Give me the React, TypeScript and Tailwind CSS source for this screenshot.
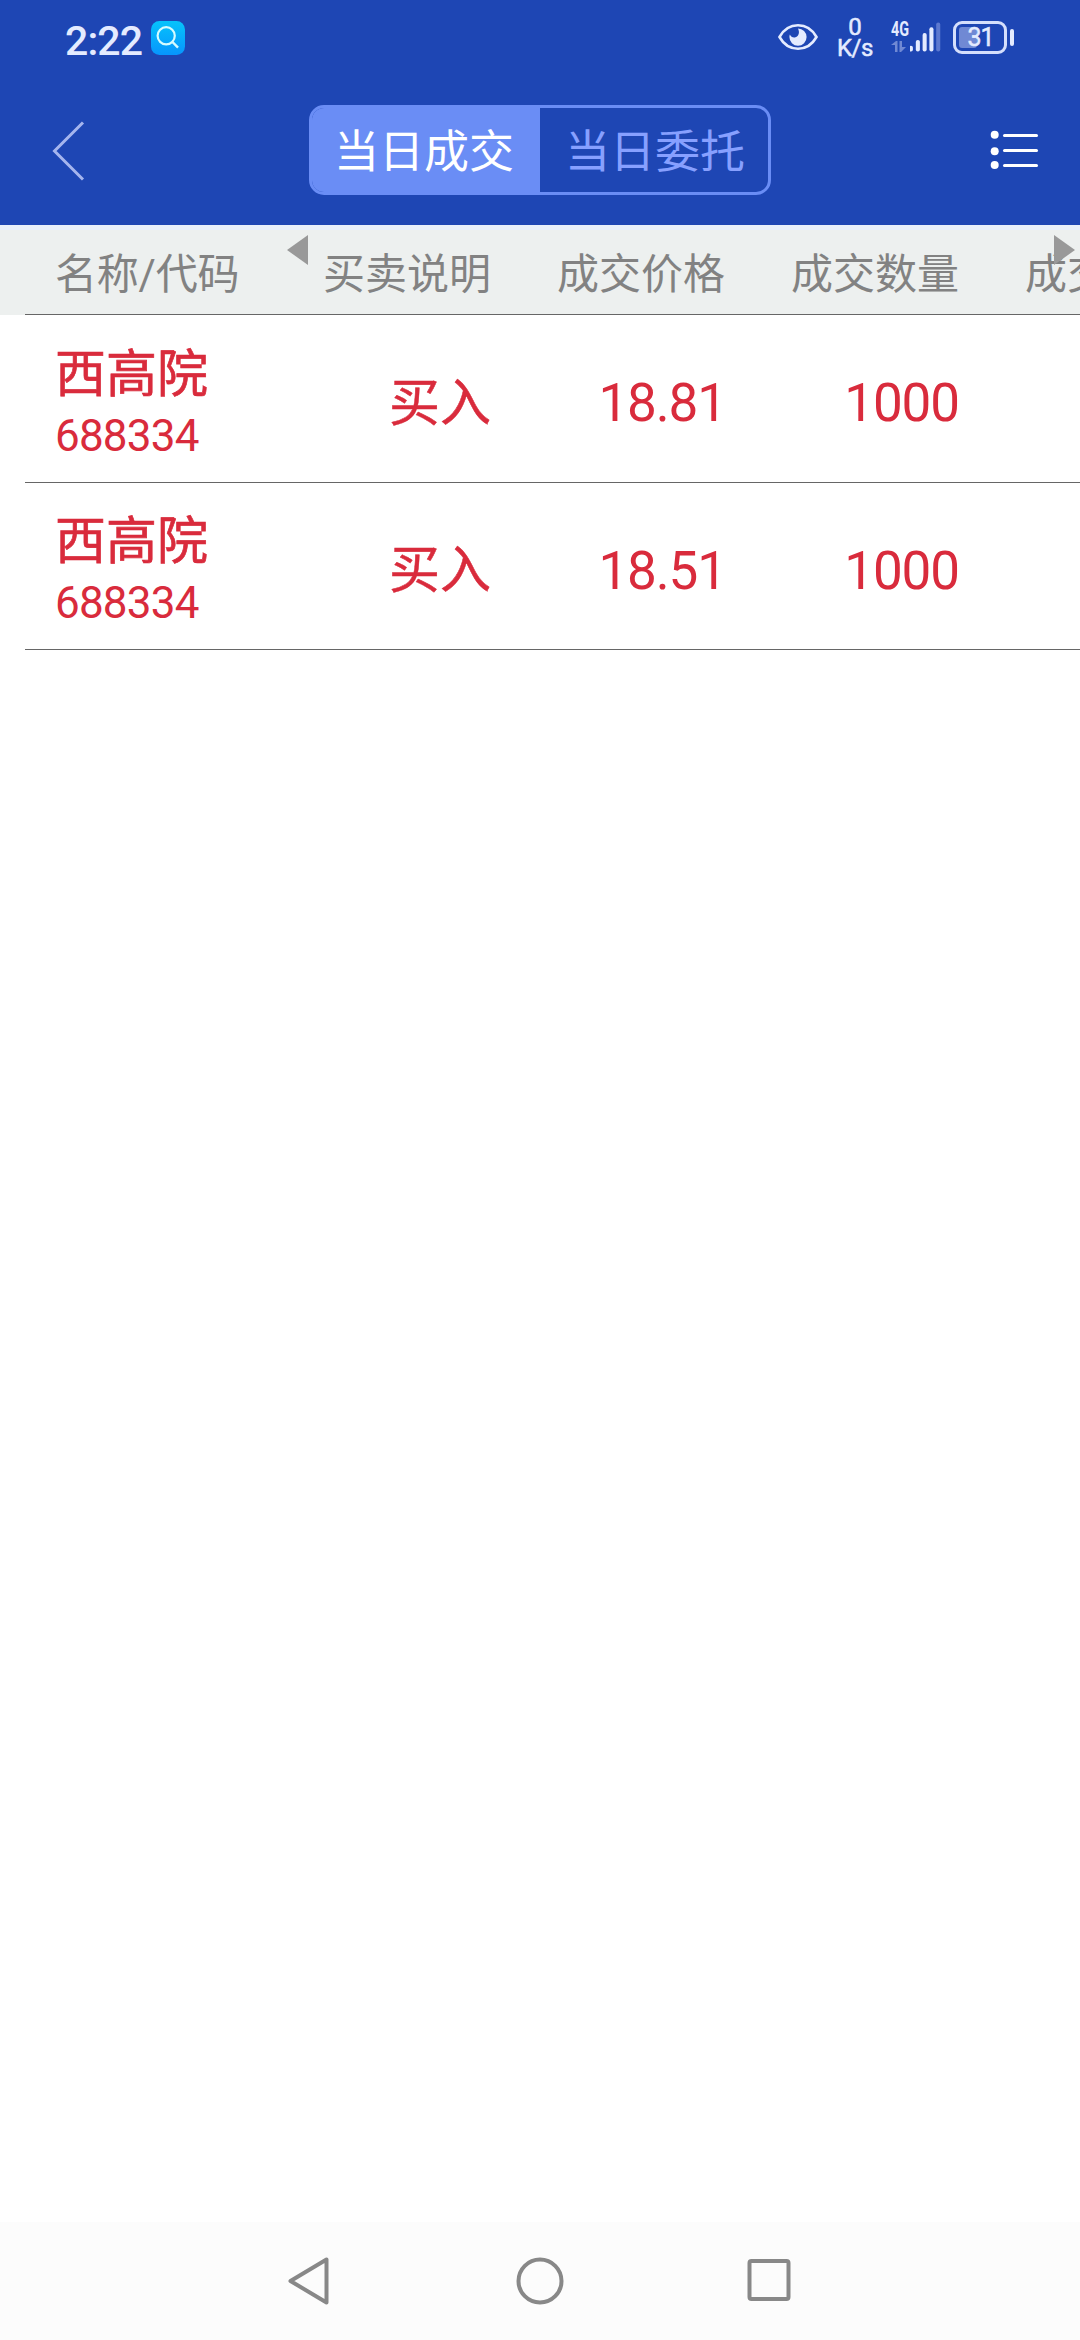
const columns = ["买卖说明", "成交价格", "成交数量"];

const trades = [
  { name: "西高院", code: "688334", side: "买入", price: "18.81", amount: "1000" },
  { name: "西高院", code: "688334", side: "买入", price: "18.51", amount: "1000" },
];

function StatusBar() {
  return (
    <div className="flex h-[75px] items-start text-[#e4ebff]">
      <div className="ml-[65px] mt-[17px] w-[86px] text-[41px] leading-[48px] font-medium tracking-[-0.9px]">2:22</div>
      <svg className="mt-[21px]" width="34" height="34" viewBox="0 0 34 34" fill="none">
        <defs>
          <linearGradient id="search" x1="0" y1="0" x2="0" y2="1">
            <stop offset="0" stopColor="#06c3fb" />
            <stop offset="1" stopColor="#0795fd" />
          </linearGradient>
        </defs>
        <rect width="34" height="34" rx="8.5" fill="url(#search)" />
        <circle cx="15.2" cy="14.8" r="8.6" stroke="#d6fbff" strokeWidth="2.2" />
        <path d="M21.5 21 27 26.6" stroke="#d6fbff" strokeWidth="2.4" />
      </svg>
      <svg className="ml-[593px] mt-[23px]" width="40" height="28" viewBox="0 0 40 28" fill="none">
        <path d="M1.5 14C6 6 12.5 2.3 20 2.3S34 6 38.500 14C34 22 27.500 25.700 20 25.700S6 22 1.500 14Z" stroke="#e4ebff" strokeWidth="2.6" />
        <path d="M20 5.500a8.600 8.600 0 1 1-8.600 8.600c0-1 .1-1.800.5-2.600 1 2.300 3.300 3.500 5.600 2.700 3.400-1.200 4.400-4.800 2.500-8.700Z" fill="#e4ebff" />
      </svg>
      <div className="ml-[18px] mt-[17px] w-[38px] text-center text-[24px] leading-[21px]">
        <div className="[-webkit-text-stroke:0.5px]">0</div>
        <div className="whitespace-nowrap tracking-[-0.4px] [-webkit-text-stroke:0.5px]">K/s</div>
      </div>
      <div className="ml-[17px] mt-[20px] flex h-[34px] w-[51px]">
        <div className="relative">
          <div className="w-[19px] text-[20px] leading-[18px] font-bold">
            <div className="origin-left scale-x-[0.72]">4G</div>
          </div>
          <svg className="mt-[2px]" width="19" height="13" viewBox="0 0 19 13" fill="#7089d4">
            <path d="M0 5 5 1h1.500v11H4V5ZM8.500 1H11v6h4l-5 5H8.500Z" />
          </svg>
        </div>
        <svg width="33" height="34" viewBox="0 0 33 34" fill="#e4ebff">
          <rect x="-1" y="26" width="4" height="6" rx="2" />
          <rect x="6" y="20" width="4.200" height="12" rx="2" />
          <rect x="13" y="13" width="4.200" height="19" rx="2" />
          <rect x="20" y="7" width="4.200" height="25" rx="2" />
          <rect x="27" y="2" width="4.200" height="30" rx="2" fill="#5d79cf" />
        </svg>
      </div>
      <div className="ml-[11px] mt-[21px] flex h-[33px] items-center">
        <div className="relative h-[33px] w-[54px] rounded-[9px] border-[3px] border-[#d5dffc]">
          <div className="absolute left-[3px] top-[3px] h-[21px] w-[18px] rounded-[3px] bg-[#7089d4]" />
          <div className="relative pl-[1px] text-center text-[25px] leading-[28px] [-webkit-text-stroke:0.5px] tracking-[-1px]">31</div>
        </div>
        <div className="ml-[3px] h-[17px] w-[4px] rounded-full bg-[#e4ebff]" />
      </div>
    </div>
  );
}

function TitleBar() {
  return (
    <div className="flex h-[150px] items-start">
      <svg className="ml-[50px] mt-[45px]" width="36" height="62" viewBox="0 0 36 62" fill="none">
        <path d="M33 2.500 4.500 31 33 59.500" stroke="#a5b5ee" strokeWidth="3" />
      </svg>
      <div className="ml-[223px] mt-[30px] flex h-[90px] w-[462px] overflow-hidden rounded-[15px] border-[3px] border-[#6a8df5] text-[45px] leading-[90px]">
        <div className="w-[228px] bg-[#6a8df5] pr-[4px] text-center text-white">当日成交</div>
        <div className="w-[228px] pl-[2px] text-center text-[#87a0ff]">当日委托</div>
      </div>
      <svg className="ml-[219px] mt-[54px]" width="50" height="44" viewBox="0 0 50 44" fill="#fff">
        <circle cx="4.700" cy="5.700" r="4" />
        <circle cx="4.700" cy="22.300" r="4" />
        <circle cx="4.700" cy="36" r="4" />
        <rect x="13" y="5" width="35" height="3" rx="1.500" />
        <rect x="13" y="20" width="35" height="3" rx="1.500" />
        <rect x="13" y="35" width="35" height="3" rx="1.500" />
      </svg>
    </div>
  );
}

export default function App() {
  return (
    <div className="flex h-[2340px] w-[1080px] flex-col overflow-hidden bg-white font-['Roboto','Noto_Sans_CJK_SC',sans-serif]">
      <header className="bg-[#1e46b4]">
        <StatusBar />
        <TitleBar />
      </header>

      <div className="relative flex h-[89px] overflow-hidden border-t-[5px] border-[#e8effb] bg-[#edf0ef] pl-[55px] text-[42px] leading-[90px] whitespace-nowrap text-[#828282]">
        <div className="w-[202px] shrink-0 tracking-[-0.2px]">名称/代码</div>
        {columns.map((c) => (
          <div key={c} className="w-[234px] shrink-0 text-right">{c}</div>
        ))}
        <div className="w-[234px] shrink-0 text-right">成交金额</div>
        <svg className="absolute left-[287px] top-[5px]" width="21" height="30" fill="#999">
          <path d="M21 0v30L0 15Z" />
        </svg>
        <svg className="absolute left-[1054px] top-[5px]" width="21" height="30" fill="#999">
          <path d="M0 0v30L21 15Z" />
        </svg>
      </div>
      <div className="flex">
        <div className="h-px w-[25px] bg-[#edf0ef]" />
        <div className="h-px flex-1 bg-[#666]" />
      </div>

      <main className="flex-1 pl-[25px]">
        {trades.map((t) => (
          <div key={t.price} className="flex h-[167px] items-center border-b border-[#666] pl-[30px] text-[#d92b3c] first:h-[168px]">
            <div className="w-[201px] pt-[8px]">
              <div className="text-[51px] leading-[66px] [-webkit-text-stroke:0.7px]">{t.name}</div>
              <div className="text-[44px] leading-[56px] tracking-[-0.8px]">{t.code}</div>
            </div>
            <div className="w-[235px] pt-[10px] text-right text-[51px] leading-[60px] [-webkit-text-stroke:0.5px]">{t.side}</div>
            <div className="w-[235px] pt-[9px] text-right text-[53px] leading-[60px] tracking-[-1.1px]">{t.price}</div>
            <div className="w-[233px] pt-[9px] text-right text-[53px] leading-[60px] tracking-[-1.1px]">{t.amount}</div>
          </div>
        ))}
      </main>

      <nav className="flex h-[118px] items-center justify-center gap-[181px] bg-[#fcfcfc]">
        <svg width="48" height="50" viewBox="0 0 48 50" fill="none" stroke="#888" strokeWidth="4" strokeLinejoin="round">
          <path d="M39.500 3.500v43L3.500 25Z" />
        </svg>
        <svg width="48" height="50" viewBox="0 0 48 50" fill="none" stroke="#888" strokeWidth="4">
          <circle cx="24" cy="25" r="21.500" />
        </svg>
        <svg width="48" height="50" viewBox="0 0 48 50" fill="none" stroke="#888" strokeWidth="4">
          <rect x="4.500" y="5" width="39" height="38" rx="2" />
        </svg>
      </nav>
    </div>
  );
}
